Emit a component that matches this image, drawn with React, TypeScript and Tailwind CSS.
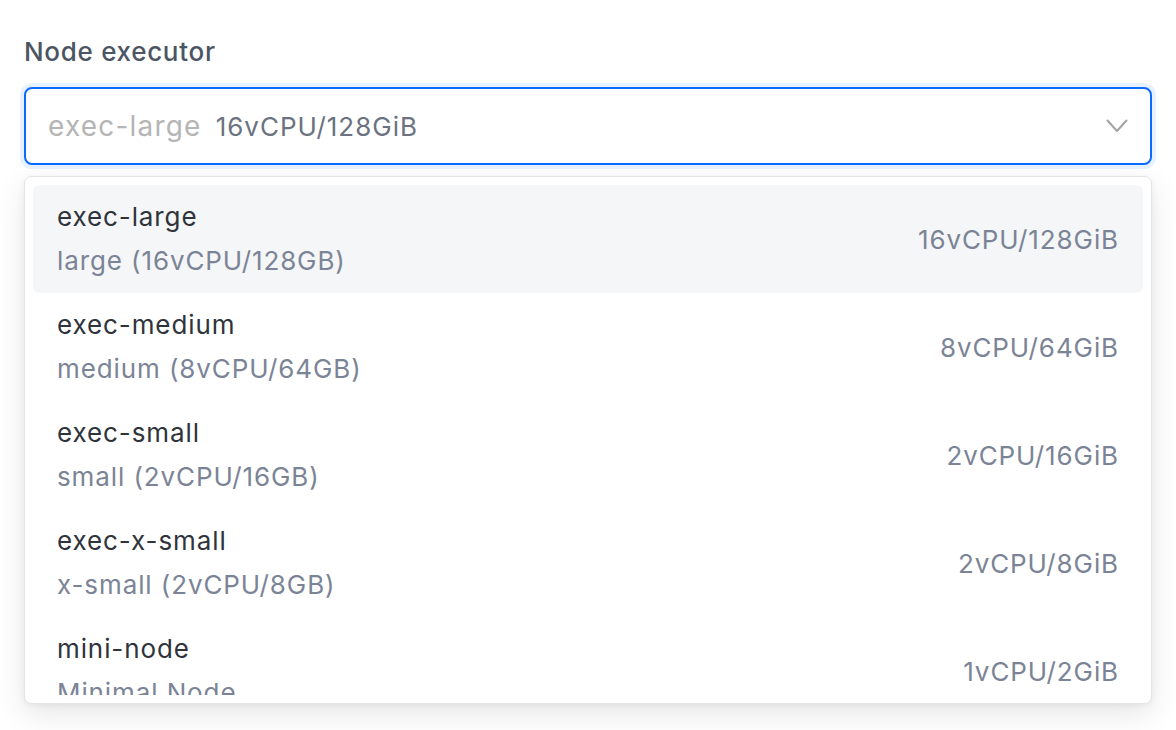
import React from "react";

type Executor = {
  name: string;
  description: string;
  spec: string;
};

const EXECUTORS: Executor[] = [
  { name: "exec-large", description: "large (16vCPU/128GB)", spec: "16vCPU/128GiB" },
  { name: "exec-medium", description: "medium (8vCPU/64GB)", spec: "8vCPU/64GiB" },
  { name: "exec-small", description: "small (2vCPU/16GB)", spec: "2vCPU/16GiB" },
  { name: "exec-x-small", description: "x-small (2vCPU/8GB)", spec: "2vCPU/8GiB" },
  { name: "mini-node", description: "Minimal Node", spec: "1vCPU/2GiB" },
];

function Chevron() {
  return (
    <svg width="22" height="14" viewBox="0 0 22 14" fill="none" aria-hidden>
      <path d="M1.5 1.5 L11 12 L20.5 1.5" stroke="#a3a3a3" strokeWidth="2" strokeLinecap="round" strokeLinejoin="round" />
    </svg>
  );
}

export default function App() {
  const selected = EXECUTORS[0];

  return (
    <div
      className="min-h-[730px] w-full bg-white px-6 pt-[36px] text-[#374151]"
      style={{ fontFamily: "Inter, 'Noto Sans', sans-serif" }}
    >
      <label className="block text-[26px] font-medium leading-[32px] tracking-[0.7px] text-[#4b5563]">
        Node executor
      </label>

      <div className="relative mt-[19px]">
        {/* trigger */}
        <button
          type="button"
          className="flex h-[78px] w-full items-center justify-between rounded-[8px] border-2 border-[#0a6cff] bg-white pl-[22px] pr-[22px] shadow-[0_0_0_4px_#e8f1ff]"
        >
          <span className="flex items-baseline gap-[14px]">
            <span className="text-[28px] tracking-[1.2px] text-[#b5b5b5]">{selected.name}</span>
            <span className="text-[26px] tracking-[1px] text-[#6b7280]">{selected.spec}</span>
          </span>
          <Chevron />
        </button>

        {/* menu */}
        <div className="mt-[11px] overflow-hidden rounded-[7px] border border-[#e3e4e8] bg-white p-[8px] shadow-[0_10px_30px_rgba(0,0,0,0.10),0_2px_6px_rgba(0,0,0,0.05)]">
          <ul className="h-[510px] overflow-hidden">
            {EXECUTORS.map((ex, i) => (
              <li
                key={ex.name}
                className={`flex h-[108px] items-center justify-between rounded-[6px] px-[24px] text-[26px] tracking-[0.9px] ${
                  i === 0 ? "bg-[#f5f6f8]" : ""
                }`}
              >
                <div className="flex flex-col">
                  <span className="leading-[44px] text-[#2f343b]">{ex.name}</span>
                  <span className="leading-[44px] text-[#7b8496]">{ex.description}</span>
                </div>
                <span className="text-[#7b8496]">{ex.spec}</span>
              </li>
            ))}
          </ul>
        </div>
      </div>
    </div>
  );
}
